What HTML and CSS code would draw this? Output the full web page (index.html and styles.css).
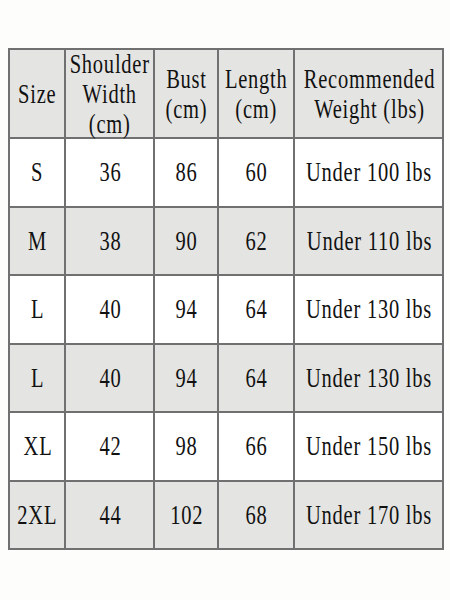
FILE: index.html
```html
<!DOCTYPE html>
<html lang="en">
<head>
<meta charset="utf-8">
<title>Size Chart</title>
<link rel="stylesheet" href="styles.css">
</head>
<body>
<div class="page">
<table class="chart">
  <colgroup>
    <col class="c-size"><col class="c-shoulder"><col class="c-bust"><col class="c-length"><col class="c-weight">
  </colgroup>
  <thead>
    <tr class="head">
      <th><div class="cell"><span class="t">Size</span></div></th>
      <th><div class="cell"><span class="t">Shoulder<br>Width<br>(cm)</span></div></th>
      <th><div class="cell"><span class="t">Bust<br>(cm)</span></div></th>
      <th><div class="cell"><span class="t">Length<br>(cm)</span></div></th>
      <th><div class="cell"><span class="t">Recommended<br>Weight (lbs)</span></div></th>
    </tr>
  </thead>
  <tbody>
    <tr class="odd"><td><div class="cell"><span class="t">S</span></div></td><td><div class="cell"><span class="t">36</span></div></td><td><div class="cell"><span class="t">86</span></div></td><td><div class="cell"><span class="t">60</span></div></td><td><div class="cell"><span class="t">Under 100 lbs</span></div></td></tr>
    <tr class="even"><td><div class="cell"><span class="t">M</span></div></td><td><div class="cell"><span class="t">38</span></div></td><td><div class="cell"><span class="t">90</span></div></td><td><div class="cell"><span class="t">62</span></div></td><td><div class="cell"><span class="t">Under 110 lbs</span></div></td></tr>
    <tr class="odd"><td><div class="cell"><span class="t">L</span></div></td><td><div class="cell"><span class="t">40</span></div></td><td><div class="cell"><span class="t">94</span></div></td><td><div class="cell"><span class="t">64</span></div></td><td><div class="cell"><span class="t">Under 130 lbs</span></div></td></tr>
    <tr class="even"><td><div class="cell"><span class="t">L</span></div></td><td><div class="cell"><span class="t">40</span></div></td><td><div class="cell"><span class="t">94</span></div></td><td><div class="cell"><span class="t">64</span></div></td><td><div class="cell"><span class="t">Under 130 lbs</span></div></td></tr>
    <tr class="odd"><td><div class="cell"><span class="t">XL</span></div></td><td><div class="cell"><span class="t">42</span></div></td><td><div class="cell"><span class="t">98</span></div></td><td><div class="cell"><span class="t">66</span></div></td><td><div class="cell"><span class="t">Under 150 lbs</span></div></td></tr>
    <tr class="even"><td><div class="cell"><span class="t">2XL</span></div></td><td><div class="cell"><span class="t">44</span></div></td><td><div class="cell"><span class="t">102</span></div></td><td><div class="cell"><span class="t">68</span></div></td><td><div class="cell"><span class="t">Under 170 lbs</span></div></td></tr>
  </tbody>
</table>
</div>
</body>
</html>
```
FILE: styles.css
```css
html, body {
  margin: 0;
  padding: 0;
}
body {
  background: #fdfdfb;
  width: 450px;
  height: 600px;
  overflow: hidden;
}
.page {
  padding: 48px 0 0 8px;
}
.chart {
  border-collapse: collapse;
  table-layout: fixed;
  width: 434px;
  font-family: "Liberation Serif", "Times New Roman", serif;
  font-size: 27px;
  line-height: 30px;
  letter-spacing: 1px;
  color: #111111;
}
.c-size { width: 56px; }
.c-shoulder { width: 89px; }
.c-bust { width: 64px; }
.c-length { width: 76px; }
.c-weight { width: 149px; }
.chart th,
.chart td {
  border: 2px solid #707070;
  padding: 0;
  text-align: center;
  vertical-align: middle;
  font-weight: normal;
  white-space: nowrap;
}
.cell {
  display: flex;
  justify-content: center;
  align-items: center;
}
.head { height: 89px; background: #e4e4e2; }
.head .cell { height: 86px; }
.odd { height: 68.5px; background: #ffffff; }
.even { height: 68.5px; background: #e4e4e2; }
.t {
  display: block;
  flex-shrink: 0;
  text-align: center;
  margin-right: -1px;
  transform: scaleX(0.76);
}
```
